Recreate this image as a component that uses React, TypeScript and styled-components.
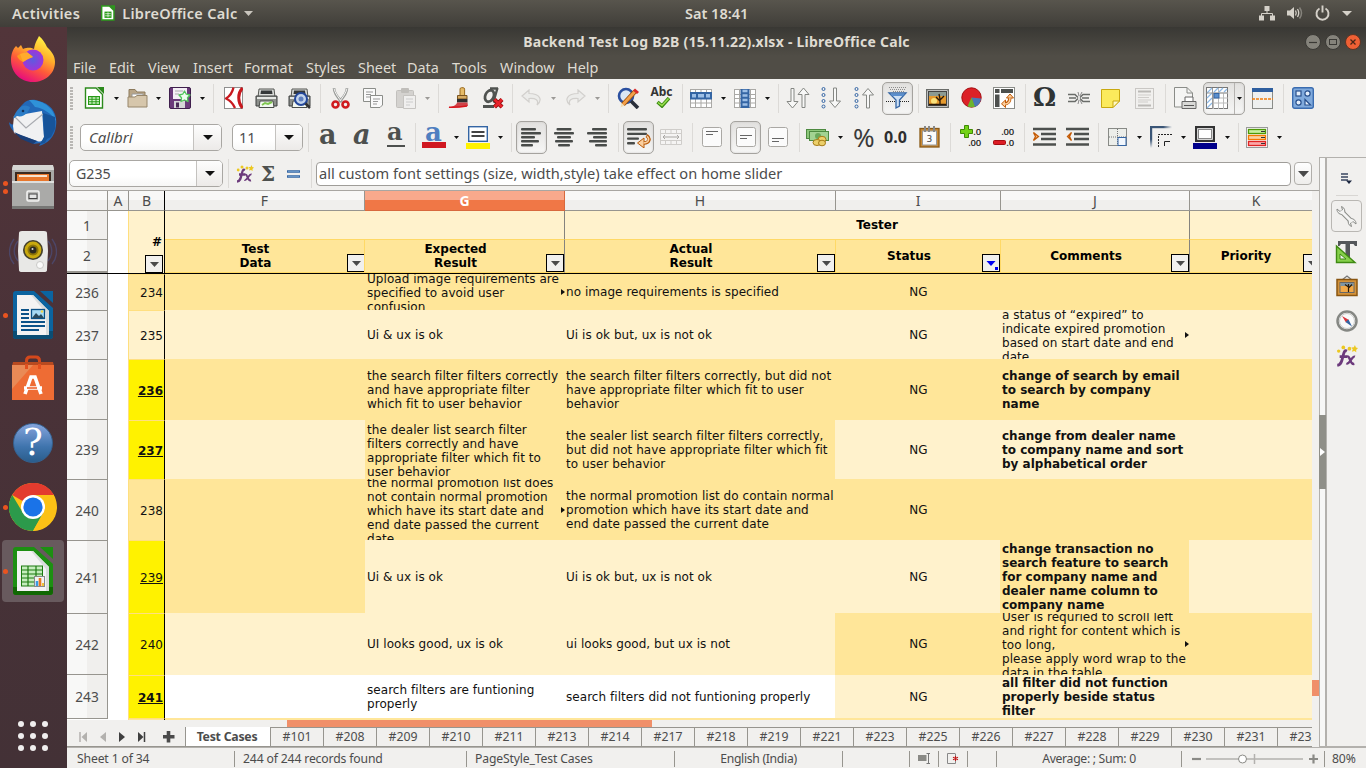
import React from "react";
import styled, { createGlobalStyle, css } from "styled-components";

const Global = createGlobalStyle`
  * { box-sizing: border-box; }
  html, body { margin: 0; padding: 0; overflow: hidden; }
  body { font-family: "Noto Sans", "Open Sans", sans-serif; font-size: 14px; color: #4c4c4c; }
  svg { display: block; flex: none; }
`;

const Desktop = styled.div`
  width: 1366px; height: 768px; display: flex; flex-direction: column; overflow: hidden; background: #f1f0ee;
`;

/* ---------- system bar ---------- */
const SystemBar = styled.header`
  height: 27px; flex: none; display: grid; grid-template-columns: 685px auto 1fr; align-items: center;
  background: linear-gradient(#58554d, #403e39); color: #dfdbd2; font-weight: 600; font-size: 14.5px; line-height: 20px; padding-bottom: 1px;
`;
const BarLeft = styled.div`display: flex; align-items: center; padding-left: 12px;`;
const AppName = styled.div`display: flex; align-items: center; gap: 7px; margin-left: 21px;`;
const BarRight = styled.div`display: flex; align-items: center; justify-content: flex-end; gap: 12px; padding-right: 14px;`;
const Label = styled.span<{ $ls?: number }>`letter-spacing: ${(p) => p.$ls ?? 0}px; white-space: nowrap;`;

/* ---------- dock ---------- */
const Body = styled.div`flex: 1; display: flex; min-height: 0;`;
const Dock = styled.nav`
  width: 67px; flex: none; display: flex; flex-direction: column; justify-content: space-between;
  background: linear-gradient(#52353a, #4a3238 45%, #433136);
`;
const DockItem = styled.div<{ $active?: boolean }>`
  height: 64px; display: flex; align-items: center; position: relative;
  &::before {
    content: ""; position: absolute; inset: 1px 3px 1px 2px; border-radius: 4px;
    background: ${(p) => (p.$active ? "#685a5e" : "transparent")};
  }
`;
const Dots = styled.div`
  width: 9px; display: flex; flex-direction: column; align-items: center; gap: 3px; position: relative; padding-left: 1px;
`;
const Dot = styled.i`width: 5px; height: 5px; border-radius: 50%; background: #e95420;`;
const DockIcon = styled.div`position: relative; width: 48px; height: 48px;`;
const AppGrid = styled.div`
  display: grid; grid-template-columns: repeat(3, 6px); gap: 6px; justify-content: center; padding-bottom: 17px; padding-right: 1px;
  i { width: 6px; height: 6px; border-radius: 50%; background: #f0eeee; }
`;

/* ---------- window ---------- */
const Window = styled.main`flex: 1; min-width: 0; display: flex; flex-direction: column;`;
const TitleBar = styled.div`
  height: 29px; flex: none; display: flex; align-items: center; color: #dfdbd2; font-weight: 700; font-size: 14px;
  background: linear-gradient(#393834, #504d46);
`;
const Title = styled.div`flex: 1; text-align: center; padding-left: 66px; padding-bottom: 1px; letter-spacing: 0.25px;`;
const WinButtons = styled.div`display: flex; gap: 4px; width: 66px; padding-left: 5px;`;
const MenuBar = styled.div`
  height: 23px; flex: none; display: flex; align-items: center; padding-left: 6px; background: #504d46; color: #dfdbd2;
  font-size: 14.4px; line-height: 20px;
`;
const MenuItem = styled.span<{ $w: number }>`width: ${(p) => p.$w}px; white-space: nowrap;`;

const Toolbar = styled.div<{ $h: number }>`
  height: ${(p) => p.$h}px; flex: none; display: flex; align-items: center; padding-left: 3px; background: #f1f0ee;
`;
const Slot = styled.div<{ $w: number }>`width: ${(p) => p.$w}px; flex: none; display: flex; align-items: center;`;
const Sep = styled.i`width: 1px; height: 29px; background: #dcdad7;`;
const Handle = styled.i`
  width: 3px; height: 23px; background: repeating-linear-gradient(#b9b7b4 0 2px, transparent 2px 3px);
`;
const pressed = css`
  border: 1px solid #a5a39f; border-radius: 5px; background: linear-gradient(#e2e1df, #f6f6f5);
  box-shadow: inset 0 0 2px #c9c7c4;
`;
const Pressed = styled.div`
  width: 31px; height: 33px; display: flex; align-items: center; justify-content: center; ${pressed}
`;
const Split = styled.div`
  width: 42px; height: 33px; display: flex; align-items: center; ${pressed}
  > div:first-child { width: 31px; height: 31px; display: flex; align-items: center; padding-left: 2px; border-right: 1px solid #b5b3b0; }
  > div:last-child { flex: 1; display: flex; justify-content: center; }
`;
const Combo = styled.div<{ $w: number; $arrow: number; $italic?: boolean; $size?: number }>`
  width: ${(p) => p.$w}px; height: 27px; display: flex; border: 1px solid #a9a7a3; border-radius: 5px; overflow: hidden;
  background: linear-gradient(#ffffff 60%, #f7f7f6); color: #4c4c4c; font-size: ${(p) => p.$size ?? 15}px;
  font-style: ${(p) => (p.$italic ? "italic" : "normal")};
  > span { flex: 1; padding-left: ${(p) => (p.$italic ? 8 : 6)}px; line-height: 25px; }
  > div { width: ${(p) => p.$arrow}px; border-left: 1px solid #c4c2bf; display: flex; align-items: center; justify-content: center;
    background: linear-gradient(#fdfdfd, #eceae8); }
`;
const Percent = styled.span`font-size: 26px; line-height: 26px; letter-spacing: -1px; color: #3a3a3a; margin-top: -1px; font-weight: 400;`;
const Decimal = styled.span`font-size: 16px; line-height: 20px; font-weight: 700; color: #2e2e2e;`;
const Letter = styled.span<{ $c?: string; $u?: boolean; $i?: boolean }>`
  font-family: "DejaVu Serif", serif; font-weight: 700; font-size: 27px; line-height: 22px; color: ${(p) => p.$c ?? "#4d504e"};
  font-style: ${(p) => (p.$i ? "italic" : "normal")}; margin-top: ${(p) => (p.$u ? -3 : -6)}px; display: block; width: 18px; height: ${(p) => (p.$u ? 23 : 21)}px;
  border-bottom: ${(p) => (p.$u ? "2px solid #4d504e" : "0")};
  ${(p) => p.$u && "font-size: 24px; line-height: 16px;"}
  ${(p) => p.$c && "font-size: 26px; line-height: 18px; height: 18px; margin-top: -3px;"}
`;
const Omega = styled.span`font-family: "DejaVu Serif", serif; font-weight: 700; font-size: 26px; line-height: 24px; color: #2f3435; margin-top: -3px; margin-left: -1px;`;
const Sigma = styled.span`font-family: "DejaVu Serif", serif; font-weight: 700; font-size: 20px; line-height: 20px; color: #4d504e; margin-left: -1px;`;
const Abc = styled.div`display: flex; flex-direction: column; align-items: center; width: 23px; font-weight: 700; font-size: 12px; line-height: 11px; color: #333; margin-top: -3px; svg { margin-left: 4px; }`;
const DecBox = styled.div`
  width: 23px; display: flex; flex-direction: column; align-items: flex-end; font-size: 9.5px; line-height: 13px; color: #222;
  font-family: "Open Sans", sans-serif; letter-spacing: -0.2px; font-weight: 600; height: 26px; justify-content: center;
  > div { display: flex; align-items: center; gap: 0; height: 11px; }
`;
const Under = styled.div<{ $c: string }>`
  width: 24px; display: flex; flex-direction: column; align-items: center; gap: 1px;
  &::after { content: ""; width: 24px; height: 6px; background: ${(p) => p.$c}; }
`;

/* ---------- work area ---------- */
const Work = styled.div`flex: 1; display: flex; min-height: 0;`;
const Left = styled.div`width: 1252px; flex: none; display: flex; flex-direction: column;`;
const FormulaBar = styled.div`height: 33px; flex: none; display: flex; align-items: center; padding-left: 2px;`;
const Input = styled.div`
  width: 975px; height: 24px; border: 1px solid #9f9d99; border-radius: 4px; background: #fff; padding-left: 2px;
  line-height: 21px; font-size: 14.6px; color: #4c4c4c; white-space: nowrap;
`;
const DropButton = styled.div`
  width: 18px; height: 23px; border: 1px solid #b1afab; border-radius: 4px; background: linear-gradient(#fefefe, #eeedeb);
  margin-left: 3px; display: flex; align-items: center; justify-content: center;
`;
const SheetWrap = styled.div`height: 530px; flex: none; display: flex; border-top: 1px solid #a8a6a2;`;
const Sheet = styled.div`width: 1245px; flex: none; display: flex; flex-direction: column; background: #fff; overflow: hidden;`;
const VScroll = styled.div`flex: 1; padding-top: 489px; background: #f1f0ee; &::after { content: ""; display: block; height: 16px; background: #f08f69; }`;

const colW = { head: 41, a: 20, b: 37, f: 200, g: 200, h: 271, i: 165, j: 189, k: 122 };

const ColHeads = styled.div`display: flex; height: 20px; flex: none;`;
const ColHead = styled.div<{ $w: number; $on?: boolean; $freeze?: boolean; $none?: boolean }>`
  width: ${(p) => p.$w}px; flex: none; text-align: center; line-height: 20px; font-size: 14px; color: #4c4c4c;
  border-right: ${(p) => (p.$none ? "0" : "1px solid #97958f")}; border-bottom: 1px solid #97958f;
  background: linear-gradient(#f8f8f7 0 50%, #f0efed 50%);
  ${(p) => p.$freeze && "border-right: 1px solid #000;"}
  ${(p) => p.$on && "background: linear-gradient(#f8a98c 0 50%, #f07746 50%); color: #fff; font-weight: 700; border-color: #d8693d;"}
`;
const Row = styled.div<{ $h: number }>`display: flex; height: ${(p) => p.$h}px; flex: none;`;
const RowHead = styled.div<{ $thick?: boolean }>`
  width: ${colW.head}px; flex: none; display: flex; align-items: center; justify-content: center; font-size: 13.7px; line-height: 18px; color: #4c4c4c;
  border-right: 1px solid #97958f; border-bottom: ${(p) => (p.$thick ? 2 : 1)}px solid #97958f; padding-top: 1px;
  background: linear-gradient(90deg, #f8f8f7 0 20px, #f0efed 20px);
`;
const Cell = styled.div<{ $w: number; $bg: string; $bold?: boolean; $center?: boolean; $drop?: boolean; $pl?: number }>`
  width: ${(p) => p.$w}px; flex: none; display: flex; align-items: center; position: relative; overflow: hidden;
  justify-content: ${(p) => (p.$center ? "center" : "flex-start")}; padding-left: ${(p) => p.$pl ?? 2}px;
  padding-top: ${(p) => (p.$drop ? 2 : 0)}px; letter-spacing: ${(p) => (p.$bold ? 0 : 0.05)}px;
  background: ${(p) => p.$bg}; color: #111; font: ${(p) => (p.$bold ? 700 : 400)} 12px/14px "DejaVu Sans", sans-serif;
  white-space: pre;
`;
const NumCell = styled.div<{ $bg: string; $bold?: boolean; $under?: boolean }>`
  width: ${colW.b}px; flex: none; display: flex; align-items: center; justify-content: flex-end; padding: 1px 1px 0 0;
  border-left: 1px solid #ffdf80; border-right: 1px solid #000; border-top: 1px solid #ffdf80; background: ${(p) => p.$bg};
  color: #111; font: ${(p) => (p.$bold ? 700 : 400)} 12px/14px "DejaVu Sans", sans-serif;
  text-decoration: ${(p) => (p.$under ? "underline" : "none")};
`;
const Frozen = styled.div`height: 63px; flex: none; display: flex; border-bottom: 1px solid #000;`;
const Stack = styled.div`display: flex; flex-direction: column; flex: none;`;
const Band = styled.div<{ $w: number; $end?: boolean }>`
  width: ${(p) => p.$w}px; height: 28px; background: #fff2cc; display: flex; align-items: center; justify-content: center; flex: none;
  border-right: ${(p) => (p.$end ? "1px solid #85837e" : "0")};
  font: 700 12px/14px "DejaVu Sans", sans-serif; color: #000;
`;
const Head = styled.div<{ $w: number; $end?: boolean }>`
  width: ${(p) => p.$w}px; height: 34px; flex: none; display: flex; align-items: center; justify-content: center; position: relative;
  background: #ffe699; border-top: 1px solid #ffd966; border-bottom: 1px solid #ffd966; overflow: hidden;
  border-right: 1px solid ${(p) => (p.$end ? "#85837e" : "#ffd966")}; padding-right: 18px; text-align: center; white-space: pre;
  font: 700 12px/14px "DejaVu Sans", sans-serif; color: #000;
`;
const Hash = styled.div`
  width: ${colW.b}px; flex: none; background: #fff2cc; border-left: 1px solid #ffdf80; border-right: 1px solid #000; position: relative;
  text-align: right; padding: 24px 2px 0 0; font: 700 12px/14px "DejaVu Sans", sans-serif; color: #000;
`;
const FilterBox = styled.div<{ $r: number; $b: number }>`
  position: absolute; right: ${(p) => p.$r}px; bottom: ${(p) => p.$b}px; width: 18px; height: 18px; border: 1px solid #000;
  background: #f1f0ee; display: flex; align-items: center; justify-content: center;
`;
const More = styled.div`position: absolute; right: 0; top: 50%; margin-top: -3px;`;

const HScroll = styled.div`height: 7px; flex: none; padding-left: 220px; &::after { content: ""; display: block; width: 365px; height: 7px; background: #f08f69; }`;
const Tabs = styled.div`height: 20px; flex: none; display: flex; width: 1245px; overflow: hidden; border-bottom: 1px solid #97958f;`;
const TabNav = styled.div`width: 118px; flex: none; display: flex; align-items: center; padding-left: 12px; gap: 11px;`;
const Tab = styled.div<{ $on?: boolean }>`
  width: ${(p) => (p.$on ? 86 : 53)}px; flex: none; text-align: center; line-height: 18px; font-size: 12.3px; color: #4c4c4c;
  border-right: 1px solid #97958f; border-top: ${(p) => (p.$on ? "0" : "1px solid #97958f")};
  ${(p) => p.$on && "background: #fff; font-weight: 700; border-left: 1px solid #97958f; line-height: 20px; letter-spacing: -0.25px; padding-right: 2px;"}
`;

const Splitter = styled.div`
  width: 8px; flex: none; border: 1px solid #b3b1ad; border-right-width: 2px; background: #f7f7f6;
  display: flex; align-items: center; height: 590px;
`;
const Grip = styled.div`width: 7px; height: 74px; margin: 0 -2px 0 -1px; background: #8f8f88; display: flex; align-items: center; justify-content: center; flex: none;`;
const Sidebar = styled.div`flex: 1; border-top: 1px solid #b3b1ad; display: flex; flex-direction: column; align-items: center; padding-top: 14px; height: 590px; border-bottom: 1px solid #b3b1ad;`;
const SideRule = styled.i`width: 22px; height: 1px; background: #d8d6d3; margin-top: 11px;`;
const SideActive = styled.div`width: 31px; height: 32px; border: 1px solid #b9b7b3; border-radius: 4px; margin-top: 4px; display: flex; align-items: center; justify-content: center;`;
const SideSlot = styled.div<{ $h: number }>`height: ${(p) => p.$h}px; display: flex; align-items: center;`;

const Status = styled.footer`
  height: 21px; flex: none; display: flex; align-items: center; border-top: 1px solid #b3b1ad; font-size: 12.2px; color: #4c4c4c; letter-spacing: -0.15px;
  padding-top: 1px;
`;
const Field = styled.div<{ $w: number; $pl?: number; $center?: boolean; $last?: boolean; $tight?: boolean }>`
  width: ${(p) => p.$w}px; height: 16px; line-height: 16px; padding-left: ${(p) => p.$pl ?? 0}px; flex: none; white-space: nowrap;
  border-right: ${(p) => (p.$last ? "0" : "1px solid #97958f")};
  ${(p) => p.$center && "display: flex; align-items: center; justify-content: center;"}
  ${(p) => p.$tight && "letter-spacing: -0.3px;"}
`;

/* ---------- icons ---------- */
const Svg = ({ w, h, children }: { w: number; h: number; children: React.ReactNode }) => (
  <svg width={w} height={h} viewBox={`0 0 ${w} ${h}`} fill="none">{children}</svg>
);
const Down = ({ c = "#111", w = 5, h = 3 }: { c?: string; w?: number; h?: number }) => (
  <Svg w={w} h={h}><path d={`M0 0H${w}L${w / 2} ${h}Z`} fill={c} /></Svg>
);
const CalcDoc = () => (
  <Svg w={20} h={22}>
    <path d="M1.500 1H12L18.500 7.500V21H1.500Z" fill="#fff" stroke="#2c8a1c" strokeWidth="1.400" />
    <path d="M13 0H20V7Z" fill="#2c8a1c" />
    <rect x="4" y="9" width="12" height="9" fill="#279a16" />
    <path d="M5 11H15M5 13.500H15M5 16H15" stroke="#d4f3cc" strokeWidth="1.500" />
    <path d="M8 9V18M12 9V18" stroke="#279a16" />
  </Svg>
);
const Folder = () => (
  <Svg w={21} h={20}>
    <path d="M2 18V1.500H8L10 4H18V18Z" fill="#b8a587" stroke="#8c7a5c" />
    <path d="M5 6H16V10H5Z" fill="#fff" stroke="#999" />
    <path d="M1 9H8L10 7.500H20V19H1Z" fill="#d6c6ab" stroke="#97866a" />
  </Svg>
);
const Save = () => (
  <Svg w={22} h={22}>
    <rect x=".5" y=".5" width="21" height="21" rx="1.500" fill="#6a3a7a" stroke="#3f1f4d" />
    <rect x="4" y="1" width="14" height="11" fill="#f4eff5" />
    <path d="M6 4H14M6 7H10" stroke="#aaa" />
    <rect x="5" y="14" width="11" height="7" fill="#d5d5d8" /><rect x="7" y="15.500" width="3" height="5" fill="#4a2a58" />
    <path d="M15.500 4L17.300 7.200L21 8L18.500 10.800L19 14.500L15.500 13L12 14.500L12.500 10.800L10 8L13.700 7.200Z" fill="#effdef" stroke="#52c45c" strokeWidth="1.300" strokeLinejoin="round" />
  </Svg>
);
const Pdf = () => (
  <Svg w={19} h={22}>
    <rect x=".5" y=".5" width="18" height="21" fill="#fff" stroke="#8f8f8f" />
    <path d="M9.500 .5C8.500 5 6 9 2 11.500C5.500 13 9 16.500 11 21" stroke="#c8191f" strokeWidth="2.300" strokeLinejoin="round" />
    <path d="M18.500 1C13.500 6 13.500 15 18.500 21" stroke="#c8191f" strokeWidth="3" />
  </Svg>
);
const Printer = ({ zoom }: { zoom?: boolean }) => (
  <Svg w={23} h={21}>
    <path d="M4 1H19L20 9H3Z" fill="#d9dbd8" stroke="#555753" />
    <path d="M6 2.500H17L17.500 6H5.500Z" fill="#353839" />
    <path d="M1 8H22V18H1Z" fill="#8d908c" stroke="#3c3f3e" />
    <path d="M2 9H21V11H2Z" fill="#e6e8e5" />
    <path d="M5 13H18L19 19.500H4Z" fill="#f4f9f2" stroke="#4a4d4a" />
    {zoom ? (<><circle cx="13" cy="11" r="6" fill="#c3d4ec" stroke="#24489a" strokeWidth="2" /><circle cx="13" cy="11" r="2.500" fill="#5e7fc0" /><path d="M17.500 15.500L22 20" stroke="#333" strokeWidth="2.500" /></>) : <path d="M7 17L10 15L13 16L17 14" stroke="#7ec64f" strokeWidth="2" />}
  </Svg>
);
const Cut = () => (
  <Svg w={19} h={22}>
    <path d="M3 1C3 6 7 11 11 15M16 1C16 6 12 11 8 15" stroke="#999b98" strokeWidth="2.600" />
    <path d="M3 1.500C4 6 7 10 10 14M16 1.500C15 6 12 10 9 14" stroke="#f4f4f4" />
    <circle cx="4.500" cy="17.500" r="3" stroke="#cf1b1f" strokeWidth="2.600" /><circle cx="14.500" cy="17.500" r="3" stroke="#cf1b1f" strokeWidth="2.600" />
  </Svg>
);
const Copy = () => (
  <Svg w={20} h={20}>
    <path d="M.5 .5H12.500V13.500H.5Z" fill="#fafafa" stroke="#8b8d89" /><path d="M3 4H10M3 6.500H8M3 9H10" stroke="#999" />
    <path d="M7.500 7.500H19.500V17L17 19.500H7.500Z" fill="#fafafa" stroke="#8b8d89" /><path d="M10 11H17M10 13.500H15M10 16H14" stroke="#999" />
  </Svg>
);
const Paste = () => (
  <Svg w={20} h={21}>
    <rect x=".5" y="2.500" width="17" height="17" rx="1" fill="#d4d2cf" stroke="#c2c0bd" /><rect x="5" y="0" width="8" height="5" rx="1" fill="#c0beba" />
    <path d="M7.500 7.500H19.500V20.500H7.500Z" fill="#f0efee" stroke="#c6c4c1" /><path d="M10 11H17M10 14H17M10 17H14" stroke="#ccc" />
  </Svg>
);
const Brush = () => (
  <Svg w={21} h={22}>
    <rect x="12" y=".7" width="4.600" height="9" rx="1.500" fill="#e5bb68" stroke="#9a6a1e" />
    <path d="M9.500 8.500H19V12H9.500Z" fill="#d6ab63" stroke="#7a5420" /><path d="M9 12H19.500V15.500H9Z" fill="#2e2e2e" />
    <path d="M9 15.500H19.500L20 19C13 20.500 6 20.500 0 20.500C5 20 8.500 18 9 15.500Z" fill="#cf4348" /><path d="M1 20.200C8 20.500 13 20 19 19" stroke="#d8141c" strokeWidth="1.500" />
  </Svg>
);
const ClearFmt = () => (
  <Svg w={22} h={22}>
    <ellipse cx="7.500" cy="9" rx="4.200" ry="6" transform="rotate(25 7.500 9)" stroke="#505350" strokeWidth="2.800" />
    <path d="M15.500 1L12 13C11.500 15 13 16 15 15M8 1.500H16" stroke="#505350" strokeWidth="2.400" /><path d="M1 19.500H12" stroke="#505350" strokeWidth="3" />
    <path d="M12.500 12.500L20 20M20 12.500L12.500 20" stroke="#8d0a0a" strokeWidth="4.200" /><path d="M12.500 12.500L20 20M20 12.500L12.500 20" stroke="#e8222a" strokeWidth="2.500" />
  </Svg>
);
const Undo = ({ flip }: { flip?: boolean }) => (
  <Svg w={22} h={18}>
    <g transform={flip ? "matrix(-1 0 0 1 22 0)" : undefined}>
      <path d="M8 1L1 7L8 13V9.500C15 9 18 11 16 16C22 11 19 4.500 8 4.500Z" fill="#ececea" stroke="#d2d0cd" strokeWidth="1.200" />
    </g>
  </Svg>
);
const Find = () => (
  <Svg w={23} h={22}>
    <circle cx="9" cy="9" r="7" fill="#dbe7f5" stroke="#2b50a0" strokeWidth="2.600" /><path d="M14 14L21 21" stroke="#2a2f3a" strokeWidth="3.600" />
    <path d="M6 17.500L18 4.500" stroke="#9a4d06" strokeWidth="4.600" /><path d="M6 17.500L18 4.500" stroke="#f3a04a" strokeWidth="3" /><path d="M18 1.500L22 5L20 7L16 3.500Z" fill="#d82a2a" /><path d="M3.500 20.500L4.500 16.200L7.500 18.800Z" fill="#f1deb8" />
  </Svg>
);
const Check = () => <Svg w={15} h={11}><path d="M1.500 5L6 9L13 1" stroke="#3c8c12" strokeWidth="3.500" /><path d="M2 5.500L6 8.500L12.500 1.500" stroke="#9be04f" strokeWidth="1.500" /></Svg>;
const RowIcon = ({ col }: { col?: boolean }) => (
  <Svg w={22} h={19}>
    <rect x=".5" y=".5" width="21" height="18" fill="#fff" stroke="#aaa9a6" /><path d="M0 5.500H22M0 9.500H22M0 14H22M5.500 0V19M11 0V19M16.500 0V19" stroke="#aaa9a6" />
    {col ? <><rect x="6.500" y="0" width="9" height="19" fill="#3465a4" /><path d="M8.500 2H13.500M8.500 6.500H13.500M8.500 11H13.500M8.500 15.500H13.500" stroke="#9dbfe6" strokeWidth="2.600" /></> :
      <><rect x="0" y="3" width="22" height="7.500" fill="#3465a4" /><path d="M2 6.700H6M8 6.700H14M16 6.700H20" stroke="#9dbfe6" strokeWidth="3.500" /></>}
  </Svg>
);
const downArrow = "M0 0V13H-4L1.500 19.500L7 13H3V0Z";
const SortIcon = ({ kind }: { kind: "both" | "down" | "up" }) => (
  <Svg w={24} h={22}>
    {kind !== "both" && <g stroke="#3465a4" strokeWidth="1"><circle cx="2.500" cy="2" r="1.500" /><circle cx="2.500" cy="8" r="1.500" /><circle cx="2.500" cy="14" r="1.500" /><circle cx="2.500" cy="19.500" r="1.500" /></g>}
    <g fill="#f8f8f7" stroke="#858783">
      {kind === "both" && <><path d={downArrow} transform="translate(5 1.500)" /><path d={downArrow} transform="matrix(1 0 0 -1 16 20.500)" /></>}
      {kind === "down" && <path d={downArrow} transform="translate(12.500 1)" />}
      {kind === "up" && <path d={downArrow} transform="matrix(1 0 0 -1 12.500 21)" />}
    </g>
  </Svg>
);
const Funnel = () => (
  <Svg w={23} h={24}>
    <path d="M3 1.500H20M4 3.500H20M7 5.500H18" stroke="#8c8c8c" strokeDasharray="1 1" /><path d="M0 15.500H23" stroke="#222" strokeDasharray="1 1" />
    <path d="M3 7H20L13.500 14V20L10 22V14Z" fill="#cfe1f5" stroke="#3465a4" strokeWidth="1.300" /><path d="M4 7.500H19L17 10H6Z" fill="#5b8fcd" />
  </Svg>
);
const Picture = () => (
  <Svg w={23} h={19}>
    <rect x=".7" y=".7" width="21.600" height="17.600" fill="#fafafa" stroke="#6a6c69" strokeWidth="1.400" /><rect x="2.500" y="2.500" width="18" height="14" fill="#e59a2e" stroke="#444" /><path d="M3 3H20V7H3Z" fill="#8b9a92" />
    <circle cx="8" cy="12" r="3" fill="#fbe27a" /><path d="M14 16V10M14 12L10 8M14 11L18 7M14 10L13 5M3 15.500H20" stroke="#2b1a08" strokeWidth="1.300" />
  </Svg>
);
const Pie = () => (
  <Svg w={21} h={22}><circle cx="10.500" cy="10.500" r="9.700" fill="#dc2127" stroke="#a40c10" /><path d="M10.500 10.500L20 11.500C19.500 16 17 19 13.500 20Z" fill="#4a78b8" /><path d="M10.500 10.500L14 19.800C11.500 20.600 8.500 20.300 6.500 19.300Z" fill="#6cb52e" /></Svg>
);
const Pivot = () => (
  <Svg w={22} h={22}><rect x=".5" y=".5" width="21" height="21" fill="#fff" stroke="#8a8c88" /><rect x="2" y="2" width="4.500" height="4" fill="#4d504e" /><rect x="8" y="2" width="12" height="4" fill="#4d504e" /><rect x="2" y="7.500" width="4.500" height="12.500" fill="#4d504e" />
    <path d="M11 17C15 17 17 15 17 10" stroke="#c35a05" strokeWidth="3.200" /><path d="M12.500 13L8.500 16.800L12.500 20.500ZM13.500 11L17 7L20.500 11Z" fill="#fbd0a0" stroke="#c35a05" /><path d="M12 17C15 17 17 15 17 10.500" stroke="#fbd0a0" strokeWidth="1.400" /></Svg>
);
const Link = () => (
  <Svg w={22} h={12}><path d="M0 2.500H7L10 5.500M22 2.500H15L12 5.500M0 9.500H7L10 6.500M22 9.500H15L12 6.500M1 6H8M14 6H21" stroke="#6a6c69" strokeWidth="1.500" /><path d="M10 0L11 4M14 0L12 4M10 12L11 8M14 12L12 8" stroke="#888" /></Svg>
);
const Note = () => <Svg w={19} h={19}><path d="M.5 .5H18.500V12L12 18.500H.5Z" fill="#fbea5c" stroke="#c8a810" /><path d="M12 18.500V12H18.500Z" fill="#fff9c4" stroke="#c8a810" /></Svg>;
const HeaderDoc = () => <Svg w={19} h={21}><rect x=".5" y=".5" width="18" height="20" fill="#f1f0ee" stroke="#c9c7c4" /><path d="M3 3.500H16M3 17.500H16" stroke="#bbb9b6" strokeWidth="2" /><path d="M3 7H16M3 9.500H14M3 12H16M3 14H13" stroke="#cfcdca" /></Svg>;
const PrintArea = () => (
  <Svg w={24} h={22}><path d="M1.500 .5H14L19.500 6V20H1.500Z" fill="#f5f5f4" stroke="#8a8c88" /><path d="M14 .5V6H19.500" stroke="#8a8c88" /><path d="M12 10H20V15H12Z" fill="#fff" stroke="#666" /><path d="M9 14.500H23V21.500H9Z" fill="#d9d9d7" stroke="#666" /><path d="M11 18.500H21" stroke="#555" /></Svg>
);
const Freeze = () => (
  <Svg w={22} h={22}><rect x=".5" y=".5" width="21" height="21" fill="#fff" stroke="#777" /><path d="M7.500 6V22M7.500 11H22M7.500 16H22M12.500 1V22M17.500 6V22M7 6H22" stroke="#bbb" />
    <path d="M1 6L6 1M1 11L6 6M1 16L6 11M1 21L6 16M8 5L12 1M13 5L17 1M18 5L21 2" stroke="#8db9e6" strokeWidth="1.200" /><path d="M6.500 1V22M1 6H22" stroke="#999" /><rect x="8" y="6.500" width="5" height="4.500" fill="#5a8fce" stroke="#3465a4" /></Svg>
);
const SplitWin = () => <Svg w={21} h={21}><rect x=".5" y=".5" width="20" height="20" fill="#eef0ef" stroke="#8a8c88" /><rect x="0" y="0" width="21" height="4" fill="#2f5f9f" /><path d="M0 11H21" stroke="#f07c0c" strokeWidth="1.600" strokeDasharray="3 1" /></Svg>;
const Shapes = () => <Svg w={22} h={22}><rect x=".7" y=".7" width="20.600" height="20.600" rx="2" fill="#80aadc" stroke="#3a6cb0" strokeWidth="1.400" /><g stroke="#274f8c" fill="#e3eefb" strokeWidth="1.200"><rect x="4" y="4" width="5" height="5" /><circle cx="15.500" cy="6.500" r="2.600" /><circle cx="6.500" cy="15.500" r="2.600" /><path d="M13 12.500L18.500 18H13Z" /></g></Svg>;
const Align = ({ kind }: { kind: "l" | "c" | "r" | "w" }) => {
  const ws = kind === "w" ? [20, 20, 12, 8] : [15, 20, 14, 18, 12];
  const gap = kind === "w" ? 4.7 : 4;
  return (
    <Svg w={kind === "w" ? 24 : 22} h={21}>
      {ws.map((w, i) => {
        const x = kind === "l" || kind === "w" ? 0 : kind === "r" ? 20 - w : (20 - w) / 2;
        return <rect key={i} x={x} y={1 + i * gap} width={w} height="2.400" rx="1" fill="#484b49" />;
      })}
      {kind === "w" && <><path d="M19.500 8.500C24 11.500 22 16 17 16" stroke="#b85a0a" strokeWidth="3.400" /><path d="M17 11V21L10.500 16Z" fill="#fbd0a0" stroke="#b85a0a" /><path d="M20 9.200C23.300 12 21.500 15.700 16.500 16" stroke="#fbd0a0" strokeWidth="1.500" /></>}
    </Svg>
  );
};
const Merge = () => <Svg w={22} h={16}><path d="M.5 .5H21.500V15.500H.5ZM0 4.500H22M0 11.500H22M5.500 0V4M11 0V4M16.500 0V4M5.500 12V16M11 12V16M16.500 12V16" fill="#f5f4f3" stroke="#cfcdca" /><path d="M3 8H19M5 6L3 8L5 10M17 6L19 8L17 10" stroke="#a9a7a4" /></Svg>;
const VAlign = ({ y }: { y: number }) => <Svg w={20} h={20}><rect x=".5" y=".5" width="19" height="19" rx="2" fill="#fbfbfb" stroke="#aaa8a4" /><path d={`M4 ${y}H16M4 ${y + 3}H11`} stroke="#666" /></Svg>;
const Money = () => <Svg w={24} h={20}><rect x=".5" y="2.500" width="19" height="9" fill="#8cc77a" stroke="#4d8a40" /><rect x="3.500" y="4.500" width="19" height="9" fill="#a2d392" stroke="#4d8a40" /><circle cx="12" cy="9" r="3" fill="#6aa95b" /><g fill="#ecd06a" stroke="#a67c18"><ellipse cx="16" cy="12.500" rx="4" ry="3.200" /><ellipse cx="11" cy="15.500" rx="4" ry="3" /><ellipse cx="16" cy="16" rx="3.500" ry="2.800" /></g></Svg>;
const Calendar = () => <Svg w={21} h={22}><rect x="1" y="2.500" width="19" height="18.500" fill="#c98a35" stroke="#8a5a18" strokeWidth="1.300" /><rect x="3.500" y="5" width="14" height="14" fill="#fafafa" stroke="#999" /><path d="M6 0V6M10 0V6M15 0V6" stroke="#888" strokeWidth="2" /><text x="7.500" y="16" fontSize="9" fontFamily="DejaVu Sans, sans-serif" fill="#444">3</text></Svg>;
const Indent = ({ out }: { out?: boolean }) => <Svg w={24} h={20}><path d="M0 2H23M8 7H23M8 12H23M0 17.500H23" stroke="#4d504e" strokeWidth="2.500" />{out ? <path d="M5.500 5.500L1.500 9.500L5.500 13.500L3.500 9.500Z" fill="#f9c08a" stroke="#c35a05" strokeWidth="1.300" /> : <path d="M.5 5.500L5.500 9.500L.5 13.500L2.500 9.500Z" fill="#f9c08a" stroke="#c35a05" strokeWidth="1.300" />}</Svg>;
const BorderIcon = () => <Svg w={22} h={22}><rect x="2.500" y="2.500" width="18" height="17" fill="#eceeea" stroke="#888a86" /><path d="M11.500 3V19M3 11H20" stroke="#777" strokeDasharray="1 1" /><rect x="12" y="11.500" width="8" height="8" fill="#f2f7fd" stroke="#3465a4" /></Svg>;
const BorderStyle = () => (
  <Svg w={22} h={22}>
    <defs><linearGradient id="fadeX"><stop offset=".6" stopColor="#3a5576" /><stop offset="1" stopColor="#3a5576" stopOpacity="0" /></linearGradient><linearGradient id="fadeY" x2="0" y2="1"><stop offset=".6" stopColor="#3a5576" /><stop offset="1" stopColor="#3a5576" stopOpacity="0" /></linearGradient></defs>
    <rect x="0" y="0" width="22" height="2.200" fill="url(#fadeX)" /><rect x="0" y="0" width="2.200" height="22" fill="url(#fadeY)" />
    <path d="M8.500 21V8.500H22" stroke="#222" strokeDasharray="2 1" /><path d="M14.500 20V15.500H20" stroke="#222" />
  </Svg>
);
const Cond = () => <Svg w={22} h={21}><rect x=".5" y=".5" width="21" height="20" fill="#fafafa" stroke="#999" /><rect x="2.500" y="2.500" width="17" height="4" fill="#c8f0a0" stroke="#4e9a06" strokeWidth="1.300" /><rect x="2.500" y="8.500" width="17" height="4" fill="#fcd0a0" stroke="#f57900" strokeWidth="1.300" /><rect x="2.500" y="14.500" width="17" height="4" fill="#fba8a8" stroke="#e02424" strokeWidth="1.300" /><path d="M15 4.500H19M15 10.500H19M15 16.500H19" stroke="#333" /></Svg>;
const Fx = ({ s = 18 }: { s?: number }) => (
  <svg width={s} height={s} viewBox="0 0 18 18" fill="none">
    <path d="M9 5C7 4 6.500 6 6 8C5 12 4.500 16.500 1 16.500M3 9.500H9" stroke="#6c3a7c" strokeWidth="2.300" /><path d="M9 9.500C12 8.500 11 16.500 15 15.500M15.500 9.500C13 8.500 11 16.500 8.500 15" stroke="#6c3a7c" strokeWidth="1.900" />
    <g fill="#ecc822"><circle cx="2.200" cy="5" r="1.400" /><circle cx="6" cy="2" r="1.500" /><circle cx="11" cy="3" r="1.500" /><path d="M15.500 0L16.300 2L18 2.500L16.500 4L16.600 6L15 5L13 5.600L13.700 3.500L12.500 2L14.600 1.900Z" /></g>
  </svg>
);

const T = ({ w, children }: { w: number; children: React.ReactNode }) => <Slot $w={w}>{children}</Slot>;
const Arr = ({ w, off }: { w: number; off?: boolean }) => <Slot $w={w}><Down c={off ? "#9b9996" : "#111"} /></Slot>;
const Bar = ({ w }: { w: number }) => <Slot $w={w}><Sep /></Slot>;

const Plus = () => <Svg w={13} h={13}><path d="M4.500 .5H8.500V4.500H12.500V8.500H8.500V12.500H4.500V8.500H.5V4.500H4.500Z" fill="#73d216" stroke="#3f8a05" /></Svg>;
const Minus = () => <Svg w={13} h={5}><rect x=".5" y=".5" width="12" height="4" rx="1" fill="#dc1c24" stroke="#a40c10" /></Svg>;

/* ---------- dock icons ---------- */
const Firefox = () => (
  <Svg w={48} h={48}>
    <defs><linearGradient id="ff" x1="35" y1="4" x2="14" y2="44" gradientUnits="userSpaceOnUse"><stop stopColor="#fff044" /><stop offset=".35" stopColor="#ffb02a" /><stop offset=".65" stopColor="#ff5a3a" /><stop offset="1" stopColor="#e8107a" /></linearGradient>
      <radialGradient id="fg"><stop stopColor="#5d5be0" /><stop offset="1" stopColor="#a035d8" /></radialGradient></defs>
    <path d="M30 1C34 4 36 8 38 12C42 16 46 20 46 27C46 39 36 47 24 47C11 47 2 37 2 25C2 19 4 14 7 11L9 13L12 10L14 14C20 12 22 13 25 14C26 8 28 5 30 1Z" fill="url(#ff)" />
    <circle cx="24" cy="25" r="10.500" fill="url(#fg)" /><path d="M8 21C14 15 22 19 24 22C20 22 18 25 14 27C12 26 9 24 8 21Z" fill="#ff9a1f" /><path d="M14 27C16 25 20 24 24 22L18 17L11 19Z" fill="#ffab2c" />
  </Svg>
);
const Thunderbird = () => (
  <Svg w={48} h={48}>
    <path d="M14 5C18 0 25 0 30 2C42 5 49 14 47 27C46 38 38 45 30 47L32 44L24 45L26 42L12 38C4 34 0 27 0 23C2 26 4 26 6 24C7 16 9 9 14 5Z" fill="#2268b8" />
    <path d="M20 1C34 0 46 10 47 22C42 14 34 9 26 8C24 5 22 3 20 1Z" fill="#2f92d8" /><path d="M4 27L5 17L33 12L35 38C34 43 31 43 28 42L5 34Z" fill="#f1f1f2" /><path d="M5 17L17 29L34 15" stroke="#a9abb0" strokeWidth="1.200" />
    <path d="M4 20C8 8 15 4 21 8C20 13 15 19 8 17Z" fill="#2b7cc7" /><circle cx="14" cy="12" r="1.300" fill="#14335c" /><path d="M34 14L46 18V30L42 38L38 40L36 44L31 45L35 38Z" fill="#17549a" /><path d="M5 33L12 36L28 42L24 45L12 40Z" fill="#1a3f78" />
  </Svg>
);
const Files = () => (
  <Svg w={48} h={48}><rect x="3" y="3" width="42" height="42" rx="2" fill="#a8a8a6" /><path d="M4 2H44L45 7H3Z" fill="#d6d6d4" /><rect x="6" y="9" width="36" height="10" fill="#3b2a20" /><path d="M8 11H40V18H8Z" fill="#e8772c" /><path d="M10 13H38" stroke="#f7e3d0" strokeWidth="2" /><path d="M3 18H45V43H3Z" fill="#aaaaa8" /><path d="M3 19H45" stroke="#dededc" strokeWidth="2" /><path d="M3 43H45V46H3Z" fill="#777775" /><rect x="18" y="28" width="12" height="10" rx="1.500" fill="#b9b9b7" stroke="#f2f2f1" strokeWidth="1.600" /><rect x="20" y="31" width="8" height="4.500" fill="#e5e5e4" stroke="#444" /></Svg>
);
const Speaker = () => (
  <Svg w={48} h={48}><path d="M5 12C-1 20 -1 30 5 37M9 14C4 20 4 28 9 34M43 12C49 20 49 30 43 37M39 14C44 20 44 28 39 34" stroke="#4c4667" strokeWidth="1.400" /><path d="M10 6Q10 4 13 4H35Q38 4 38 6L39 24L38 43Q38 45 35 45H13Q10 45 10 43L9 24Z" fill="#e8e8e6" /><circle cx="24" cy="23" r="10" fill="#44402c" /><circle cx="24" cy="23" r="8.400" fill="#c9a90e" /><circle cx="24" cy="23" r="5.500" fill="#8e7508" /><circle cx="24" cy="23" r="3.500" fill="#2c2a20" /><circle cx="23.500" cy="22" r="1" fill="#ddd" /><circle cx="31" cy="38" r="3.500" fill="#fafaf9" stroke="#c9c9c7" /></Svg>
);
const OfficeDoc = ({ calc }: { calc?: boolean }) => {
  const a = calc ? "#1d8f12" : "#0b64a0";
  const b = calc ? "#106803" : "#0a4d74";
  return (
    <Svg w={48} h={48}>
      <path d="M7 0H25L44 17V45Q44 48 41 48H7Q4 48 4 45V3Q4 0 7 0Z" fill={a} /><path d="M4 40H44V45Q44 48 41 48H7Q4 48 4 45Z" fill={b} />
      <path d="M8 4H24L40 20V44H8Z" fill="#f3f3f3" /><path d="M24 4L40 20V44L37 44V22L22 4Z" fill="#d9dcdc" /><path d="M31 0H44V12Z" fill={a} />
      {calc ? (<><rect x="12.500" y="19" width="21" height="20" fill="#c5edbd" stroke="#1c7a10" /><path d="M12 23H34M12 27H34M12 31H34M12 35H34M19 19V39M27 19V39" stroke="#1c7a10" strokeWidth="1.200" /><rect x="25.500" y="29.500" width="10" height="10" fill="#f3f3f3" stroke="#888" /><path d="M28 39V34" stroke="#3a9be0" strokeWidth="2.600" /><path d="M31 39V31" stroke="#e87820" strokeWidth="2.600" /><path d="M34 39V36" stroke="#f2c23a" strokeWidth="2" /></>) :
        (<><path d="M12 19H20M12 23H20M12 27H20M12 31H36M12 35H36M12 39H30" stroke="#0b5288" strokeWidth="1.800" /><rect x="22.500" y="18.500" width="13" height="9" fill="#a7daf4" stroke="#0b5288" strokeWidth="1.300" /><path d="M23 27L27 22L30 25L32 23L35 27Z" fill="#2b4a5c" /><circle cx="33" cy="20.500" r="1.200" fill="#f6d648" /></>)}
    </Svg>
  );
};
const Software = () => (
  <Svg w={48} h={48}><path d="M17.500 15V6Q17.500 2 21 2H27Q30.500 2 30.500 6V15" stroke="#d3481c" strokeWidth="3" /><path d="M4 7H44L45 11H3Z" fill="#b84a20" /><path d="M3 10H45V45H3Z" fill="#ee6c34" /><path d="M3 10H24L3 34Z" fill="#e98a56" /><path d="M17.500 9V14M30.500 9V14" stroke="#e2501f" strokeWidth="3" /><path d="M16 39L22 22H26L32 39" stroke="#fff" strokeWidth="3.600" /><path d="M15 33H33" stroke="#fff" strokeWidth="3.500" /><path d="M18 33H28" stroke="#ee5a20" strokeWidth="1.500" /></Svg>
);
const HelpMark = styled.div`
  width: 40px; height: 40px; margin: 4px; border-radius: 50%; background: linear-gradient(#85a4dc, #3f74ad 60%, #2a5d8c); border: 1px solid #35618f;
  color: #fff; font: 400 37px/38px "DejaVu Serif", serif; text-align: center;
`;
const Chrome = () => (
  <Svg w={48} h={48}><circle cx="24" cy="24" r="24" fill="#fbc116" /><path d="M24 24L3.200 12A24 24 0 0 1 44.800 12Z" fill="#e33b2e" /><path d="M24 0A24 24 0 0 1 44.800 12H24Z" fill="#e33b2e" /><path d="M3.200 12A24 24 0 0 0 24 48L34 30L24 24L14 30Z" fill="#2c9a4b" /><path d="M24 48L34.400 30L24 24L46 16A24 24 0 0 1 24 48Z" fill="#fbc116" /><path d="M24 12H44.800L46 16L24 24Z" fill="#fbc116" /><circle cx="24" cy="24" r="12" fill="#fff" /><circle cx="24" cy="24" r="9.600" fill="#1a73e8" /></Svg>
);

/* ---------- sheet data ---------- */
const D = "#ffe699";
const L = "#fff2cc";
const Y = "#fff200";
const W = "#ffffff";
type R = {
  n: number; h: number; hh: number; id: string; idBg: string; bold?: boolean; under?: boolean;
  bg: [string, string, string, string, string, string]; g: string; H: string; j?: string; jBold?: boolean; gMore?: boolean; jMore?: boolean; gDrop?: boolean;
};
const rows: R[] = [
  { n: 236, h: 36, hh: 37, id: "234", idBg: D, bg: [D, D, D, D, D, D], g: "Upload image requirements are\nspecified to avoid user\nconfusion", H: "no image requirements is specified", gMore: true, gDrop: true },
  { n: 237, h: 49, hh: 49, id: "235", idBg: L, bg: [L, L, L, L, L, L], g: "Ui & ux is ok", H: "Ui is ok but, ux is not ok", j: "a status of “expired” to\nindicate expired promotion\nbased on start date and end\ndate", jMore: true },
  { n: 238, h: 61, hh: 60, id: "236", idBg: Y, bold: true, under: true, bg: [D, D, D, D, D, D], g: "the search filter filters correctly\nand have appropriate filter\nwhich fit to user behavior", H: "the search filter filters correctly, but did not\nhave appropriate filter which fit to user\nbehavior", j: "change of search by email\nto search by company\nname", jBold: true },
  { n: 239, h: 59, hh: 60, id: "237", idBg: Y, bold: true, under: true, bg: [L, D, D, L, L, L], g: "the dealer list search filter\nfilters correctly and have\nappropriate filter which fit to\nuser behavior", H: "the sealer list search filter filters correctly,\nbut did not have appropriate filter which fit\nto user behavior", j: "change from dealer name\nto company name and sort\nby alphabetical order", jBold: true, gDrop: true },
  { n: 240, h: 61, hh: 61, id: "238", idBg: D, bg: [D, D, D, D, D, D], g: "the normal promotion list does\nnot contain normal promotion\nwhich have its start date and\nend date passed the current\ndate", H: "the normal promotion list do contain normal\npromotion which have its start date and\nend date passed the current date", gMore: true, gDrop: true },
  { n: 241, h: 73, hh: 73, id: "239", idBg: Y, under: true, bg: [D, L, L, L, D, L], g: "Ui & ux is ok", H: "Ui is ok but, ux is not ok", j: "change transaction no\nsearch feature to search\nfor company name and\ndealer name column to\ncompany name", jBold: true },
  { n: 242, h: 62, hh: 61, id: "240", idBg: Y, bg: [L, L, L, D, D, D], g: "UI looks good, ux is ok", H: "ui looks good, but ux is not", j: "User is requried to scroll left\nand right for content which is\ntoo long,\nplease apply word wrap to the\ndata in the table", jMore: true },
  { n: 243, h: 43, hh: 44, id: "241", idBg: Y, bold: true, under: true, bg: [W, W, W, L, L, L], g: "search filters are funtioning\nproperly", H: "search filters did not funtioning properly", j: "all filter did not function\nproperly beside status\nfilter", jBold: true },
];
const MoreMark = () => <More><Svg w={4} h={6}><path d="M0 0L4 3L0 6Z" fill="#111" /></Svg></More>;
const Filter = ({ r = 0, b = 0, on }: { r?: number; b?: number; on?: boolean }) => (
  <FilterBox $r={r} $b={b}>
    {on ? <Svg w={14} h={14}><path d="M2.500 5H11.500L7 10Z" fill="#0000f0" /><rect x="11" y="11" width="3" height="3" fill="#0000f0" /></Svg> : <Down w={9} h={5} c="#4a4a4a" />}
  </FilterBox>
);
const menus: [string, number][] = [["File", 36], ["Edit", 39], ["View", 45], ["Insert", 51], ["Format", 62], ["Styles", 52], ["Sheet", 49], ["Data", 45], ["Tools", 48], ["Window", 67], ["Help", 40]];
const tabs = ["#101", "#208", "#209", "#210", "#211", "#213", "#214", "#217", "#218", "#219", "#221", "#223", "#225", "#226", "#227", "#228", "#229", "#230", "#231", "#232"];

export default function App() {
  return (
    <Desktop>
      <Global />
      <SystemBar>
        <BarLeft>
          <Label $ls={0.35}>Activities</Label>
          <AppName>
            <svg width="14" height="16" viewBox="0 0 20 22"><path d="M1 1H12L18.500 7.500V21H1Z" fill="#fff" stroke="#2c9a1c" strokeWidth="2" /><path d="M13 0H20V7Z" fill="#2c9a1c" /><path d="M5 9H15V18H5Z" fill="#279a16" /><path d="M6 12H14M6 15H14M10 10V17" stroke="#fff" /></svg>
            <Label $ls={0.3}>LibreOffice Calc</Label>
            <Down w={9} h={5} c="#c9c5bd" />
          </AppName>
        </BarLeft>
        <Label>Sat 18:41</Label>
        <BarRight>
          <Svg w={16} h={16}><path d="M5.500 1H10.500V6H5.500ZM0 10.500H5V15.500H0ZM11 10.500H16V15.500H11Z" fill="#d5d1c9" /><path d="M8 6V8.500M2.500 11V8.500H13.500V11" stroke="#d5d1c9" /></Svg>
          <Svg w={16} h={14}><path d="M0 4.500H3L7 1V13L3 9.500H0Z" fill="#d5d1c9" /><path d="M8.500 4.500Q10 7 8.500 9.500M10.500 3Q13 7 10.500 11" stroke="#d5d1c9" strokeWidth="1.300" /><path d="M12.500 1.500Q16.500 7 12.500 12.500" stroke="#86837c" strokeWidth="1.500" /></Svg>
          <Svg w={15} h={16}><path d="M4.500 3.500A6 6 0 1 0 10.500 3.500M7.500 .5V7.500" stroke="#d5d1c9" strokeWidth="1.900" /></Svg>
          <Down w={10} h={5} c="#d5d1c9" />
        </BarRight>
      </SystemBar>
      <Body>
        <Dock>
          <div>
            <DockItem><Dots /><DockIcon><Firefox /></DockIcon></DockItem>
            <DockItem><Dots /><DockIcon><Thunderbird /></DockIcon></DockItem>
            <DockItem><Dots><Dot /><Dot /></Dots><DockIcon><Files /></DockIcon></DockItem>
            <DockItem><Dots /><DockIcon><Speaker /></DockIcon></DockItem>
            <DockItem><Dots><Dot /></Dots><DockIcon><OfficeDoc /></DockIcon></DockItem>
            <DockItem><Dots /><DockIcon><Software /></DockIcon></DockItem>
            <DockItem><Dots /><DockIcon><HelpMark>?</HelpMark></DockIcon></DockItem>
            <DockItem><Dots><Dot /></Dots><DockIcon><Chrome /></DockIcon></DockItem>
            <DockItem $active><Dots><Dot /></Dots><DockIcon><OfficeDoc calc /></DockIcon></DockItem>
          </div>
          <AppGrid>{Array.from({ length: 9 }, (_, i) => <i key={i} />)}</AppGrid>
        </Dock>
        <Window>
          <TitleBar>
            <Title>Backend Test Log B2B (15.11.22).xlsx - LibreOffice Calc</Title>
            <WinButtons>
              <Svg w={16} h={16}><circle cx="8" cy="8" r="7.500" fill="#85837b" stroke="#3a3935" /><path d="M4 8.500H12" stroke="#3a3935" strokeWidth="1.200" /></Svg>
              <Svg w={16} h={16}><circle cx="8" cy="8" r="7.500" fill="#85837b" stroke="#3a3935" /><rect x="4.500" y="5.500" width="7" height="5" stroke="#3a3935" /></Svg>
              <Svg w={16} h={16}><circle cx="8" cy="8" r="7.500" fill="#ef6034" stroke="#5c3425" /><path d="M5.500 5.500L10.500 10.500M10.500 5.500L5.500 10.500" stroke="#4a2617" strokeWidth="1.300" /></Svg>
            </WinButtons>
          </TitleBar>
          <MenuBar>{menus.map(([m, w]) => <MenuItem key={m} $w={w}>{m}</MenuItem>)}</MenuBar>
          <Toolbar $h={38}>
            <T w={14}><Handle /></T><T w={30}><CalcDoc /></T><Arr w={13} /><T w={29}><Folder /></T><Arr w={13} /><T w={31}><Save /></T><Arr w={13} /><Bar w={11} />
            <T w={31}><Pdf /></T><T w={33}><Printer /></T><T w={32}><Printer zoom /></T><Bar w={11} />
            <T w={32}><Cut /></T><T w={33}><Copy /></T><T w={29}><Paste /></T><Arr w={13} off /><Bar w={10} />
            <T w={34}><Brush /></T><T w={30}><ClearFmt /></T><Bar w={9} />
            <T w={30}><Undo /></T><Arr w={13} off /><T w={31}><Undo flip /></T><Arr w={13} off /><Bar w={9} />
            <T w={33}><Find /></T><T w={32}><Abc>Abc<Check /></Abc></T><Bar w={8} />
            <T w={31}><RowIcon /></T><Arr w={13} /><T w={31}><RowIcon col /></T><Arr w={13} /><Bar w={8} />
            <T w={35}><SortIcon kind="both" /></T><T w={33}><SortIcon kind="down" /></T><T w={28}><SortIcon kind="up" /></T><T w={36}><Pressed><Funnel /></Pressed></T><Bar w={8} />
            <T w={35}><Picture /></T><T w={32}><Pie /></T><T w={32}><Pivot /></T><Bar w={9} />
            <T w={34}><Omega>Ω</Omega></T><T w={33}><Link /></T><T w={34}><Note /></T><T w={30}><HeaderDoc /></T><Bar w={8} />
            <T w={30}><PrintArea /></T><T w={49}><Split><div><Freeze /></div><div><Down /></div></Split></T><T w={31}><SplitWin /></T><Bar w={9} /><T w={24}><Shapes /></T>
          </Toolbar>
          <Toolbar $h={40}>
            <T w={10}><Handle /></T>
            <T w={152}><Combo $w={142} $arrow={28} $italic><span>Calibri</span><div><Down w={10} h={5} /></div></Combo></T>
            <T w={76}><Combo $w={71} $arrow={27} $size={14.5}><span>11</span><div><Down w={10} h={5} /></div></Combo></T><Bar w={11} />
            <T w={34}><Letter>a</Letter></T><T w={34}><Letter $i>a</Letter></T><T w={28}><Letter $u>a</Letter></T><Bar w={7} />
            <T w={32}><Under $c="#d01820"><Letter $c="#4f7fc0">a</Letter></Under></T><Arr w={12} />
            <T w={32}><Under $c="#fff200"><Svg w={20} h={16}><rect x=".7" y=".7" width="18.600" height="14.600" fill="#fff" stroke="#3465a4" strokeWidth="1.400" /><path d="M3.500 6H16.500M3.500 10H16.500" stroke="#444" strokeWidth="1.800" /></Svg></Under></T><Arr w={13} /><Bar w={5} />
            <T w={38}><Pressed><Align kind="l" /></Pressed></T><T w={33}><Align kind="c" /></T><T w={31}><Align kind="r" /></T><Bar w={5} />
            <T w={37}><Pressed><Align kind="w" /></Pressed></T><T w={32}><Merge /></T><Bar w={10} />
            <T w={28}><VAlign y={4.5} /></T><T w={38}><Pressed><VAlign y={8.5} /></Pressed></T><T w={31}><VAlign y={11.5} /></T><Bar w={7} />
            <T w={32}><Money /></T><Arr w={15} /><T w={31}><Percent>%</Percent></T><T w={35}><Decimal>0.0</Decimal></T><T w={31}><Calendar /></T><Bar w={8} />
            <T w={33}><DecBox><div><Plus />.0</div><div>.00</div></DecBox></T><T w={33}><DecBox><div>.00</div><div><Minus />.0</div></DecBox></T><Bar w={9} />
            <T w={33}><Indent /></T><T w={32}><Indent out /></T><Bar w={8} />
            <T w={31}><BorderIcon /></T><Arr w={13} /><T w={31}><BorderStyle /></T><Arr w={12} />
            <T w={32}><Under $c="#00008b"><Svg w={20} h={16}><rect x="1" y="1" width="18" height="14" fill="#fff" stroke="#333" strokeWidth="2.400" /><rect x="3.500" y="3.500" width="13" height="9" fill="#fff" stroke="#888" /></Svg></Under></T><Arr w={13} /><Bar w={8} />
            <T w={31}><Cond /></T><Arr w={13} />
          </Toolbar>
          <Work>
            <Left>
              <FormulaBar>
                <T w={159}><Combo $w={154} $arrow={26} $size={14.2}><span>G235</span><div><Down w={10} h={5} /></div></Combo></T>
                <Bar w={8} /><T w={26}><Fx /></T><T w={25}><Sigma>Σ</Sigma></T><T w={24}><Svg w={13} h={8}><path d="M0 1.500H13M0 6.500H13" stroke="#3465a4" strokeWidth="2.400" /><path d="M1 1.500H12M1 6.500H12" stroke="#729fcf" strokeWidth=".8" /></Svg></T><Bar w={5} />
                <Input><Label>all custom font settings (size, width,style) take effect on home slider</Label></Input>
                <DropButton><Down w={11} h={6} c="#4a4a4a" /></DropButton>
              </FormulaBar>
              <SheetWrap>
                <Sheet>
                  <ColHeads>
                    <ColHead $w={colW.head} /><ColHead $w={colW.a + 1}>A</ColHead><ColHead $w={colW.b - 1} $freeze>B</ColHead>
                    <ColHead $w={colW.f}>F</ColHead><ColHead $w={colW.g} $on>G</ColHead><ColHead $w={colW.h}>H</ColHead>
                    <ColHead $w={colW.i}>I</ColHead><ColHead $w={colW.j}>J</ColHead><ColHead $w={132} $none>K</ColHead>
                  </ColHeads>
                  <Frozen>
                    <Stack><Row $h={29}><RowHead>1</RowHead></Row><Row $h={33}><RowHead $thick>2</RowHead></Row></Stack>
                    <Cell $w={colW.a} $bg="#fff" />
                    <Hash>#<Filter r={1} b={0} /></Hash>
                    <Stack>
                      <Row $h={28}><Band $w={400} $end /><Band $w={625} $end>Tester</Band><Band $w={131} /></Row>
                      <Row $h={34}>
                        <Head $w={200}>{"Test\nData"}<Filter r={-1} /></Head>
                        <Head $w={200} $end>{"Expected\nResult"}<Filter /></Head>
                        <Head $w={271}>{"Actual\nResult"}<Filter /></Head>
                        <Head $w={165}>Status<Filter on /></Head>
                        <Head $w={189} $end>Comments<Filter /></Head>
                        <Head $w={131}>Priority<Filter r={-1} /></Head>
                      </Row>
                    </Stack>
                  </Frozen>
                  <Row $h={446}>
                    <Stack>
                      {rows.map((r) => <Row key={r.n} $h={r.hh}><RowHead>{r.n}</RowHead></Row>)}
                    </Stack>
                    <Stack>
                      {rows.map((r) => (
                        <Row key={r.n} $h={r.h}>
                          <Cell $w={colW.a} $bg="#fff" />
                          <NumCell $bg={r.idBg} $bold={r.bold} $under={r.under}>{r.id}</NumCell>
                          <Cell $w={colW.f} $bg={r.bg[0]} />
                          <Cell $w={colW.g} $bg={r.bg[1]} $drop={r.gDrop}>{r.g}{r.gMore && <MoreMark />}</Cell>
                          <Cell $w={colW.h - 1} $bg={r.bg[2]} $pl={1}>{r.H}</Cell>
                          <Cell $w={colW.i} $bg={r.bg[3]} $center>NG</Cell>
                          <Cell $w={colW.j} $bg={r.bg[4]} $bold={r.jBold} $drop={r.jMore}>{r.j}{r.jMore && <MoreMark />}</Cell>
                          <Cell $w={colW.k + 1} $bg={r.bg[5]} />
                        </Row>
                      ))}
                      <Row $h={2}><Cell $w={colW.a} $bg="#fff" /><NumCell $bg={D} /><Cell $w={1147} $bg={D} /></Row>
                    </Stack>
                  </Row>
                </Sheet>
                <VScroll />
              </SheetWrap>
              <HScroll />
              <Tabs>
                <TabNav>
                  <Svg w={9} h={12}><path d="M1 1V11" stroke="#b3b1ae" strokeWidth="1.500" /><path d="M8 1V11L2.500 6Z" fill="#b3b1ae" /></Svg>
                  <Svg w={8} h={12}><path d="M7 1V11L1 6Z" fill="#b3b1ae" /></Svg>
                  <Svg w={8} h={12}><path d="M1 1V11L7 6Z" fill="#3f3f3f" /></Svg>
                  <Svg w={9} h={12}><path d="M1 1V11L6.500 6Z" fill="#3f3f3f" /><path d="M7.500 1V11" stroke="#3f3f3f" strokeWidth="1.500" /></Svg>
                  <Svg w={22} h={13}><path d="M11.500 1V12.500M6 6.800H17.500" stroke="#4a4a4a" strokeWidth="3.600" /></Svg>
                </TabNav>
                <Tab $on>Test Cases</Tab>
                {tabs.map((t) => <Tab key={t}>{t}</Tab>)}
              </Tabs>
            </Left>
            <Splitter><Grip><Svg w={5} h={8}><path d="M0 0L5 4L0 8Z" fill="#fff" /></Svg></Grip></Splitter>
            <Sidebar>
              <Svg w={12} h={12}><path d="M0 2H7M0 5H7M0 8H7" stroke="#3a4660" strokeWidth="1.300" /><path d="M5 8.500H11L8 12Z" fill="#1c2740" /></Svg>
              <SideRule />
              <SideActive><Svg w={23} h={23}><path d="M6 6L17 17" stroke="#888a86" strokeWidth="5" /><path d="M2 4A5 5 0 0 0 9 9A5 5 0 0 0 6.500 1.500L7.500 5L5 6.500L2 4ZM21 19A5 5 0 0 0 14 14A5 5 0 0 0 16.500 21.500L15.500 18L18 16.500Z" fill="#f4f4f3" stroke="#888a86" /><path d="M6 6L17 17" stroke="#f4f4f3" strokeWidth="3" /></Svg></SideActive>
              <SideSlot $h={40}><Svg w={23} h={24}><path d="M3 1H22V6H20L18.500 4H15V19L17 21H9L10.500 19V4H6L4.500 6H3Z" fill="#54575a" /><path d="M1.500 6V22.500H20Z" fill="#86d04a" stroke="#3f8a12" strokeWidth="1.400" /><path d="M5 14V19H11Z" fill="#f1f0ee" stroke="#3f8a12" /></Svg></SideSlot>
              <SideSlot $h={28}><Svg w={22} h={22}><path d="M6 5L11 1L16 5" stroke="#777" strokeWidth="1.300" /><rect x="1" y="4.500" width="20" height="16" fill="#d3923a" stroke="#8a5510" strokeWidth="1.500" /><rect x="4" y="7.500" width="14" height="10" fill="#f0a848" stroke="#666" /><path d="M4.500 8H17.500V11H4.500Z" fill="#7d95a4" /><path d="M12.500 17V12L9 9.500M12.500 13L16 9.500M12.500 12V9" stroke="#2b1a08" strokeWidth="1.200" /></Svg></SideSlot>
              <SideSlot $h={42}><Svg w={22} h={22}><circle cx="11" cy="11" r="9.500" fill="#fafafa" stroke="#858783" strokeWidth="2.500" /><circle cx="11" cy="11" r="7.500" stroke="#c9cac8" /><path d="M6 6L13 10L10 12.500Z" fill="#d8343a" /><path d="M16 16.500L9.500 12L12.500 9.500Z" fill="#3465a4" /></Svg></SideSlot>
              <SideSlot $h={28}><Fx s={22} /></SideSlot>
            </Sidebar>
          </Work>
          <Status>
            <Field $w={168} $pl={10}>Sheet 1 of 34</Field>
            <Field $w={232} $pl={8}>244 of 244 records found</Field>
            <Field $w={208} $pl={8}>PageStyle_Test Cases</Field>
            <Field $w={168} $center $tight>English (India)</Field>
            <Field $w={67} />
            <Field $w={29} $center><Svg w={12} h={11}><rect x="0" y="2" width="8.500" height="6" fill="#8a8a86" /><path d="M8.500 .5H12M8.500 10.500H12M10.500 0V11" stroke="#777" /></Svg></Field>
            <Field $w={29} $center><Svg w={12} h={12}><path d="M8 .5H.5V10.500H8.500V8M8.500 .5V3" stroke="#888" /><path d="M8.500 3V8M6 4.200L11 6.800M11 4.200L6 6.800" stroke="#c01818" strokeWidth="1.100" /></Svg></Field>
            <Field $w={29} />
            <Field $w={185} $center $tight>Average: ; Sum: 0</Field>
            <Field $w={143} $pl={10}><Svg w={128} h={16}><path d="M0 8H9" stroke="#8a8a86" strokeWidth="2.200" /><path d="M14 8H111M62.500 3V13" stroke="#b3b1ae" strokeWidth="1.500" /><circle cx="50.500" cy="8" r="4" fill="#fff" stroke="#8a8a86" /><path d="M117 8H126M121.500 3.500V12.500" stroke="#8a8a86" strokeWidth="2.200" /></Svg></Field>
            <Field $w={41} $pl={7} $last>80%</Field>
          </Status>
        </Window>
      </Body>
    </Desktop>
  );
}
